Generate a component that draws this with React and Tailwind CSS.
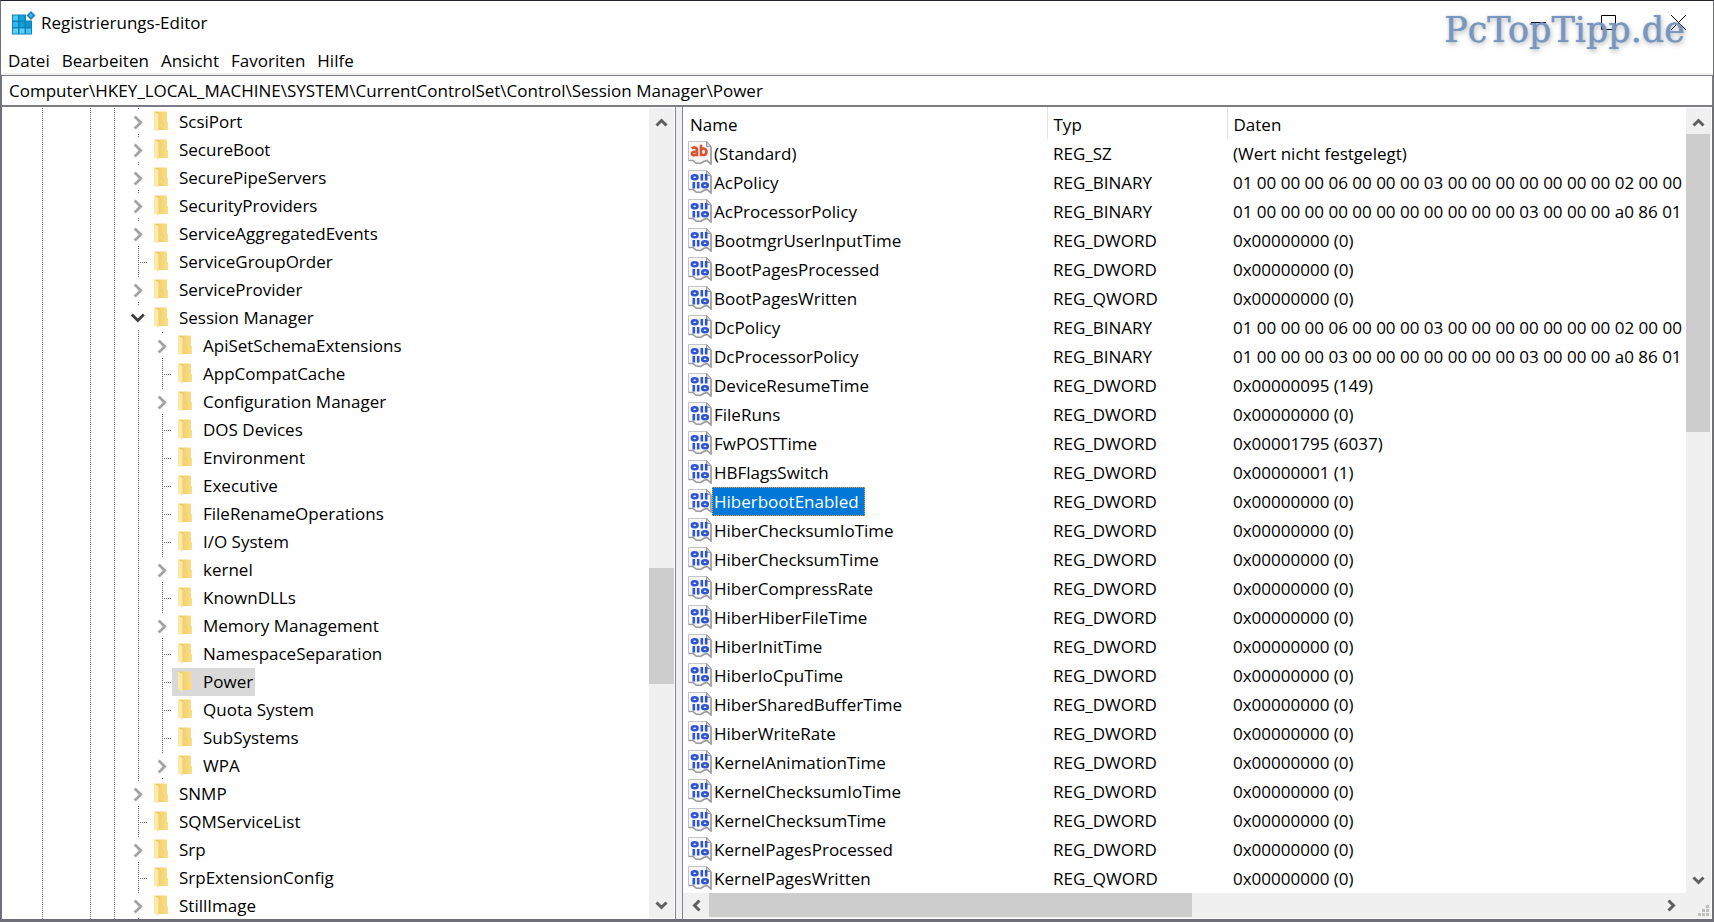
const TREE = [
  ["ScsiPort", 0, "closed"],
  ["SecureBoot", 0, "closed"],
  ["SecurePipeServers", 0, "closed"],
  ["SecurityProviders", 0, "closed"],
  ["ServiceAggregatedEvents", 0, "closed"],
  ["ServiceGroupOrder", 0, "leaf"],
  ["ServiceProvider", 0, "closed"],
  ["Session Manager", 0, "open"],
  ["ApiSetSchemaExtensions", 1, "closed"],
  ["AppCompatCache", 1, "leaf"],
  ["Configuration Manager", 1, "closed"],
  ["DOS Devices", 1, "leaf"],
  ["Environment", 1, "leaf"],
  ["Executive", 1, "leaf"],
  ["FileRenameOperations", 1, "leaf"],
  ["I/O System", 1, "leaf"],
  ["kernel", 1, "closed"],
  ["KnownDLLs", 1, "leaf"],
  ["Memory Management", 1, "closed"],
  ["NamespaceSeparation", 1, "leaf"],
  ["Power", 1, "leaf"],
  ["Quota System", 1, "leaf"],
  ["SubSystems", 1, "leaf"],
  ["WPA", 1, "closed"],
  ["SNMP", 0, "closed"],
  ["SQMServiceList", 0, "leaf"],
  ["Srp", 0, "closed"],
  ["SrpExtensionConfig", 0, "leaf"],
  ["StillImage", 0, "closed"],
];

const ZERO = "0x00000000 (0)";
const VALUES = [
  ["(Standard)", "REG_SZ", "(Wert nicht festgelegt)"],
  ["AcPolicy", "REG_BINARY", "01 00 00 00 06 00 00 00 03 00 00 00 00 00 00 00 02 00 00"],
  ["AcProcessorPolicy", "REG_BINARY", "01 00 00 00 00 00 00 00 00 00 00 00 03 00 00 00 a0 86 01"],
  ["BootmgrUserInputTime", "REG_DWORD", ZERO],
  ["BootPagesProcessed", "REG_DWORD", ZERO],
  ["BootPagesWritten", "REG_QWORD", ZERO],
  ["DcPolicy", "REG_BINARY", "01 00 00 00 06 00 00 00 03 00 00 00 00 00 00 00 02 00 00"],
  ["DcProcessorPolicy", "REG_BINARY", "01 00 00 00 03 00 00 00 00 00 00 00 03 00 00 00 a0 86 01"],
  ["DeviceResumeTime", "REG_DWORD", "0x00000095 (149)"],
  ["FileRuns", "REG_DWORD", ZERO],
  ["FwPOSTTime", "REG_DWORD", "0x00001795 (6037)"],
  ["HBFlagsSwitch", "REG_DWORD", "0x00000001 (1)"],
  ["HiberbootEnabled", "REG_DWORD", ZERO],
  ["HiberChecksumIoTime", "REG_DWORD", ZERO],
  ["HiberChecksumTime", "REG_DWORD", ZERO],
  ["HiberCompressRate", "REG_DWORD", ZERO],
  ["HiberHiberFileTime", "REG_DWORD", ZERO],
  ["HiberInitTime", "REG_DWORD", ZERO],
  ["HiberIoCpuTime", "REG_DWORD", ZERO],
  ["HiberSharedBufferTime", "REG_DWORD", ZERO],
  ["HiberWriteRate", "REG_DWORD", ZERO],
  ["KernelAnimationTime", "REG_DWORD", ZERO],
  ["KernelChecksumIoTime", "REG_DWORD", ZERO],
  ["KernelChecksumTime", "REG_DWORD", ZERO],
  ["KernelPagesProcessed", "REG_DWORD", ZERO],
  ["KernelPagesWritten", "REG_QWORD", ZERO],
];

function AppIcon() {
  return (
    <svg width="24" height="24" viewBox="0 0 24 24" aria-hidden="true">
      <path d="M0 3.500h14v6h6V23.500H0z" fill="#0c84bd" />
      <path d="M1 4.500h5v5H1z" fill="#4fc8f4" />
      <path d="M7.500 4.500h5v5h-5z" fill="#12a3dc" />
      <path d="M1 11h5v5H1z" fill="#35b5ea" />
      <path d="M7.500 11h5v5h-5z" fill="#0fa0d8" />
      <path d="M14 11h5v5h-5z" fill="#0a95cf" />
      <path d="M1 17.500h5v5H1z" fill="#5fd0f8" />
      <path d="M7.500 17.500h5v5h-5z" fill="#5fd0f8" />
      <path d="M14 17.500h5v5h-5z" fill="#45c3f3" />
      <path d="M19 0l4.500 4.500L19 9l-4.500-4.500z" fill="#1a86bd" />
      <path d="M19 2.500l2 2-2 2-2-2z" fill="#4fb4de" />
    </svg>
  );
}

function Folder() {
  return (
    <svg width="14" height="22" viewBox="0 0 14 22" className="shrink-0" aria-hidden="true">
      <defs>
        <linearGradient id="folderBack" x1="0" x2="1">
          <stop offset="0" stopColor="#ecc765" />
          <stop offset="1" stopColor="#fbdf86" />
        </linearGradient>
      </defs>
      <path d="M0 0.500h13v10l1 1v7.500H4z" fill="url(#folderBack)" />
      <path d="M0 0.500l4.500 3v17.500L0 18.500z" fill="#ffe9a6" />
    </svg>
  );
}

function Twisty({ state }) {
  return (
    <svg width="22" height="28" viewBox="0 0 22 28" className="block" aria-hidden="true">
      {state === "leaf" ? (
        <g stroke="#6e6e6e" strokeDasharray="1 1">
          <path d="M12.500 0v28M12 14.500h11" />
        </g>
      ) : (
        <path d="M12.500 0v1M12.500 26v1" stroke="#6e6e6e" />
      )}
      {state === "closed" && (
        <path d="M8.700 8.500l6 6-6 6" fill="none" stroke="#a3a3a3" strokeWidth="2.800" />
      )}
      {state === "open" && (
        <path d="M5.800 10.500l6 6 6-6" fill="none" stroke="#404040" strokeWidth="2.800" />
      )}
    </svg>
  );
}

function TreeRow({ name, depth, state }) {
  const lines = depth ? [40.5, 88.5, 112.5, 136.5] : [40.5, 88.5, 112.5];
  const width = depth ? 148 : 124;
  return (
    <li className="flex h-7 items-stretch" role="treeitem" aria-selected={name === "Power"}>
      <svg width={width} height="28" className="shrink-0" aria-hidden="true">
        {lines.map((x) => (
          <path key={x} d={`M${x} 0v28`} stroke="#6e6e6e" strokeDasharray="1 1" />
        ))}
      </svg>
      {state === "leaf" ? (
        <span className="shrink-0">
          <Twisty state={state} />
        </span>
      ) : (
        <button type="button" className="shrink-0" aria-label={`${name} umschalten`}>
          <Twisty state={state} />
        </button>
      )}
      <span
        className={
          name === "Power"
            ? "flex items-center gap-[11px] bg-[#d9d9d9] pr-0.5 pl-1.5"
            : "flex items-center gap-[11px] pr-0.5 pl-1.5"
        }
      >
        <Folder />
        <span className="whitespace-nowrap">{name}</span>
      </span>
    </li>
  );
}

function ValueIcon({ text }) {
  return (
    <svg width="24" height="24" viewBox="0 0 24 24" className="shrink-0" aria-hidden="true">
      <path
        d="M0.500 0.500H19l4 5V23l-4-3.500-3.500 1.500-3 1.500-4.500-0.500L5 19.500H0.500z"
        fill="#f8f8f9"
        stroke="#c4c4c4"
      />
      <path d="M18.500 0.500v5H23z" fill="#d6d6d6" stroke="#9a9a9a" />
      <path
        d="M23 6v17l-4-3.500-3.500 1-3 2-4.500-0.500L5 19.500H0.500"
        fill="none"
        stroke="#9b9b9b"
        strokeWidth="1.600"
      />
      {text ? (
        <g fill="none" stroke="#dc5130" strokeWidth="2.600">
          <path d="M3.700 7.400c2-1.400 5.300-1.200 5.300 1.500v6.300M9 10.800c-3-0.300-5.100 0.300-5.100 1.900 0 2 3.800 2 5.100 0" />
          <path d="M13 3.800v11.400M13 9c1.500-2.400 5.400-1.800 5.400 1.700 0 3.800-3.900 4.200-5.400 1.900" />
        </g>
      ) : (
        <g fill="none" stroke="#2f55d6" strokeWidth="2.600">
          <ellipse cx="6.700" cy="7.200" rx="2.800" ry="2" />
          <path d="M13.800 4v6.500M18.200 4v6.500M5.800 12v6.500M10.200 12v6.500" />
          <ellipse cx="17" cy="15.200" rx="2.800" ry="2" />
        </g>
      )}
    </svg>
  );
}

const ARROWS = {
  up: "M3.500 12.500l5-5 5 5",
  down: "M3.500 5.500l5 5 5-5",
  left: "M11.500 3.500l-5 5 5 5",
  right: "M6.500 3.500l5 5-5 5",
};

function Arrow({ dir, label, className }) {
  return (
    <button type="button" aria-label={label} className={className}>
      <svg width="17" height="17" viewBox="0 0 17 17" aria-hidden="true">
        <path d={ARROWS[dir]} fill="none" stroke="#5f5f5f" strokeWidth="3" />
      </svg>
    </button>
  );
}

const V_ARROW = "flex h-[26px] w-full shrink-0 items-center justify-center";
const H_ARROW = "flex h-full w-[26px] shrink-0 items-center justify-center";

export default function App() {
  return (
    <div className="flex h-screen flex-col overflow-hidden border-x border-t border-x-[#6f6f78] border-t-[#23222e] bg-white font-['Open_Sans',sans-serif] text-[17px] leading-6 text-black">
      <header className="relative flex h-11 shrink-0 items-center justify-between">
        <div className="flex items-center gap-[5px] pl-[11px]">
          <AppIcon />
          <h1>Registrierungs-Editor</h1>
        </div>
        <div className="flex self-start">
          <button type="button" aria-label="Minimieren" className="flex h-11 w-[70px] justify-center pt-3.5">
            <svg width="15" height="15" aria-hidden="true">
              <path d="M0 7.500h15" stroke="#000" />
            </svg>
          </button>
          <button type="button" aria-label="Maximieren" className="flex h-11 w-[70px] justify-center pt-3.5">
            <svg width="15" height="15" aria-hidden="true">
              <path d="M0.500 0.500h14v14h-14z" fill="none" stroke="#000" />
            </svg>
          </button>
          <button type="button" aria-label="Schließen" className="flex h-11 w-[70px] justify-center pt-3.5">
            <svg width="15" height="15" aria-hidden="true">
              <path d="M0 0l15 15M15 0L0 15" stroke="#000" />
            </svg>
          </button>
        </div>
        <div className="pointer-events-none absolute top-[9px] right-7 font-['DejaVu_Serif',serif] text-[35px] leading-10 text-[#7996bf] [text-shadow:0_0_1px_#7996bf,1px_2px_5px_rgba(90,90,90,0.5)]">
          PcTopTipp.de
        </div>
      </header>

      <nav className="flex h-7 shrink-0 items-center gap-3 pt-1 pl-[7px]">
        {["Datei", "Bearbeiten", "Ansicht", "Favoriten", "Hilfe"].map((m) => (
          <button type="button" key={m}>
            {m}
          </button>
        ))}
      </nav>

      <div className="flex h-[34px] shrink-0 border-t-2 border-[#f0f0f0]">
        <input
          aria-label="Adresse"
          className="h-8 min-w-0 flex-1 border border-b-2 border-[#7b7c85] bg-white pl-[7px] outline-none"
          defaultValue={"Computer\\HKEY_LOCAL_MACHINE\\SYSTEM\\CurrentControlSet\\Control\\Session Manager\\Power"}
        />
      </div>

      <main className="flex min-h-0 flex-1 border-x border-b-3 border-[#6d6e78] bg-[#f0f0f0]">
        <section className="flex w-[674px] shrink-0 border-r border-[#80858f] bg-white">
          <ul role="tree" aria-label="Schlüssel" className="min-w-0 flex-1 overflow-hidden pt-px">
            {TREE.map(([name, depth, state]) => (
              <TreeRow key={name} name={name} depth={depth} state={state} />
            ))}
          </ul>
          <div className="my-px mr-px flex w-[25px] flex-col bg-[#f0f0f0]">
            <Arrow dir="up" label="Nach oben" className={V_ARROW} />
            <div className="flex-[434_1_0%]" />
            <div className="flex-[116_1_0%] bg-[#cdcdcd]" />
            <div className="flex-[208_1_0%]" />
            <Arrow dir="down" label="Nach unten" className={V_ARROW} />
          </div>
        </section>

        <section className="ml-1.5 flex min-w-0 flex-1 flex-col border-l border-[#80858f] bg-white pr-px pb-px">
          <div className="flex min-h-0 flex-1">
            <div className="min-w-0 flex-1 overflow-hidden">
              <table className="w-full table-fixed border-collapse text-left">
                <colgroup>
                  <col className="w-[364px]" />
                  <col className="w-[180px]" />
                  <col />
                </colgroup>
                <thead>
                  <tr className="h-8">
                    <th className="border-r border-[#e2e2e2] p-0 pt-1 pl-[7px] font-normal">Name</th>
                    <th className="border-r border-[#e2e2e2] p-0 pt-1 pl-1.5 font-normal">Typ</th>
                    <th className="p-0 pt-1 pl-1.5 font-normal">Daten</th>
                  </tr>
                </thead>
                <tbody>
                  {VALUES.map(([name, type, data]) => (
                    <tr key={name} className="h-[29px]">
                      <td className="p-0 pl-[5px]">
                        <div className="flex h-[29px] items-center">
                          <div className="pb-px">
                            <ValueIcon text={type === "REG_SZ"} />
                          </div>
                          <span
                            className={
                              name === "HiberbootEnabled"
                                ? "flex h-full items-center border border-dotted border-[#ff9a3c] bg-[#0078d7] pr-[5px] pl-px text-white"
                                : "pl-0.5"
                            }
                          >
                            {name}
                          </span>
                        </div>
                      </td>
                      <td className="p-0 pl-1.5">{type}</td>
                      <td className="overflow-hidden p-0 pl-1.5 whitespace-nowrap">{data}</td>
                    </tr>
                  ))}
                </tbody>
              </table>
            </div>
            <div className="mt-px flex w-[25px] shrink-0 flex-col bg-[#f0f0f0]">
              <Arrow dir="up" label="Nach oben" className={V_ARROW} />
              <div className="mr-px flex-[298_1_0%] bg-[#cdcdcd]" />
              <div className="flex-[435_1_0%]" />
              <Arrow dir="down" label="Nach unten" className={V_ARROW} />
            </div>
          </div>
          <div className="flex h-[25px] shrink-0 bg-[#f0f0f0]">
            <Arrow dir="left" label="Nach links" className={H_ARROW} />
            <div className="mb-px flex-[484_1_0%] bg-[#cdcdcd]" />
            <div className="flex-[465_1_0%]" />
            <Arrow dir="right" label="Nach rechts" className={H_ARROW} />
            <div className="flex w-7 items-end justify-end pr-0.5 pb-0.5">
              <svg width="11" height="11" viewBox="0 0 11 11" fill="#bfbfbf" aria-hidden="true">
                <path d="M8 0h3v3H8zM8 4h3v3H8zM8 8h3v3H8zM4 4h3v3H4zM4 8h3v3H4zM0 8h3v3H0z" />
              </svg>
            </div>
          </div>
        </section>
      </main>
    </div>
  );
}
